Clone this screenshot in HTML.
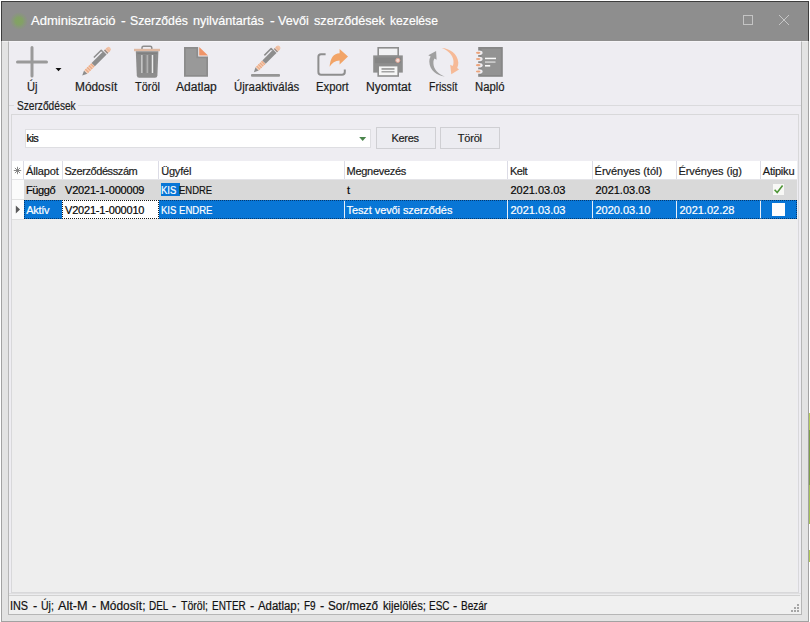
<!DOCTYPE html>
<html>
<head>
<meta charset="utf-8">
<title>Vevői szerződések kezelése</title>
<style>
html,body{margin:0;padding:0;}
body{width:810px;height:622px;overflow:hidden;background:#ffffff;position:relative;font-family:"Liberation Sans",sans-serif;font-size:12px;color:#1a1a1a;}
div,svg{position:absolute;box-sizing:border-box;}
.tx{white-space:pre;line-height:16px;height:16px;-webkit-text-stroke:0.2px currentColor;}
</style>
</head>
<body>

<div style="left:809px;top:413px;width:1px;height:17px;background:#b4cc5c;"></div>
<div style="left:809px;top:430px;width:1px;height:55px;background:#7f9f4a;"></div>
<div style="left:809px;top:485px;width:1px;height:39px;background:#a6c25a;"></div>
<div style="left:809px;top:550px;width:1px;height:12px;background:#b0c858;"></div>
<div style="left:1px;top:1px;width:808px;height:621px;background:#e3e3e3;border:1px solid #a2a2a2;"></div>
<div style="left:8px;top:41px;width:794px;height:574px;background:#eeedf2;border:1px solid #b6b6b6;border-top:none;"></div>
<div style="left:1px;top:1px;width:808px;height:40px;background:#8e8e8e;border:1px solid #3d3d3d;border-bottom:none;"></div>
<div style="left:10px;top:12px;width:18px;height:18px;border-radius:9px;background:radial-gradient(circle closest-side,#82a362 0%,#83a166 40%,rgba(131,160,104,0.5) 65%,rgba(138,148,130,0) 100%);"></div>
<div class="tx" style="left:31.3px;top:12.6px;font-size:13px;letter-spacing:0px;color:#ffffff;transform-origin:0 0;transform:scaleX(1.001);">Adminisztráció</div>
<div class="tx" style="left:120.74px;top:12.6px;font-size:13px;letter-spacing:0px;color:#ffffff;transform-origin:0 0;transform:scaleX(1.080);">-</div>
<div class="tx" style="left:129.5px;top:12.6px;font-size:13px;letter-spacing:0px;color:#ffffff;transform-origin:0 0;transform:scaleX(0.942);">Szerződés</div>
<div class="tx" style="left:193.4px;top:12.6px;font-size:13px;letter-spacing:0px;color:#ffffff;transform-origin:0 0;transform:scaleX(0.970);">nyilvántartás</div>
<div class="tx" style="left:270.24px;top:12.6px;font-size:13px;letter-spacing:0px;color:#ffffff;transform-origin:0 0;transform:scaleX(1.080);">-</div>
<div class="tx" style="left:278.4px;top:12.6px;font-size:13px;letter-spacing:0px;color:#ffffff;transform-origin:0 0;transform:scaleX(0.965);">Vevői</div>
<div class="tx" style="left:313.6px;top:12.6px;font-size:13px;letter-spacing:0px;color:#ffffff;transform-origin:0 0;transform:scaleX(0.972);">szerződések</div>
<div class="tx" style="left:389.8px;top:12.6px;font-size:13px;letter-spacing:0px;color:#ffffff;transform-origin:0 0;transform:scaleX(0.934);">kezelése</div>
<div style="left:743px;top:15px;width:10px;height:10px;border:1px solid #c4c4c4;"></div>
<svg style="left:776px;top:12px" width="16" height="16" viewBox="0 0 16 16"><path d="M3 3 L13 13 M13 3 L3 13" stroke="#c6c6c6" stroke-width="1" fill="none"/></svg>
<div style="left:2px;top:41px;width:806px;height:1px;background:rgba(255,255,255,0.45);"></div>
<div class="tx" style="left:26.8px;top:78.6px;font-size:12px;letter-spacing:0px;color:#1c1c1c;transform-origin:0 0;transform:scaleX(0.928);">Új</div>
<div class="tx" style="left:74.8px;top:78.6px;font-size:12px;letter-spacing:0px;color:#1c1c1c;transform-origin:0 0;transform:scaleX(0.990);">Módosít</div>
<div class="tx" style="left:135.4px;top:78.6px;font-size:12px;letter-spacing:0px;color:#1c1c1c;transform-origin:0 0;transform:scaleX(0.911);">Töröl</div>
<div class="tx" style="left:175.9px;top:78.6px;font-size:12px;letter-spacing:0px;color:#1c1c1c;transform-origin:0 0;transform:scaleX(1.002);">Adatlap</div>
<div class="tx" style="left:233.6px;top:78.6px;font-size:12px;letter-spacing:0px;color:#1c1c1c;transform-origin:0 0;transform:scaleX(0.949);">Újraaktiválás</div>
<div class="tx" style="left:315.7px;top:78.6px;font-size:12px;letter-spacing:0px;color:#1c1c1c;transform-origin:0 0;transform:scaleX(0.939);">Export</div>
<div class="tx" style="left:365.7px;top:78.6px;font-size:12px;letter-spacing:0px;color:#1c1c1c;transform-origin:0 0;transform:scaleX(1.012);">Nyomtat</div>
<div class="tx" style="left:428.7px;top:78.6px;font-size:12px;letter-spacing:0px;color:#1c1c1c;transform-origin:0 0;transform:scaleX(0.873);">Frissít</div>
<div class="tx" style="left:475.2px;top:78.6px;font-size:12px;letter-spacing:0px;color:#1c1c1c;transform-origin:0 0;transform:scaleX(0.941);">Napló</div>
<svg id="icons" style="left:0;top:41px" width="810" height="45" viewBox="0 41 810 45">
<path d="M17.5 62.1 H46.5 M32 47.5 V76" stroke="#9a9a9a" stroke-width="3" stroke-linecap="round" fill="none"/>
<path d="M55.5 68 H61.5 L58.5 71.2 Z" fill="#111"/>
<g transform="translate(82.2,75.6) rotate(-45)"><path d="M0 0 L5.00 -2.35 L5.00 2.35 Z" fill="#8d8d8d"/><rect x="5.00" y="-2.35" width="10.60" height="4.7" fill="#f4cdb4"/><rect x="6.30" y="-2.35" width="1.10" height="4.7" fill="#eaa783"/><rect x="8.80" y="-2.35" width="1.10" height="4.7" fill="#eaa783"/><rect x="11.30" y="-2.35" width="1.10" height="4.7" fill="#eaa783"/><rect x="13.80" y="-2.35" width="1.10" height="4.7" fill="#eaa783"/><rect x="15.60" y="-2.35" width="16.60" height="4.7" fill="#8d8d8d"/><rect x="33.00" y="-2.35" width="1.80" height="4.7" fill="#a09088"/><path d="M34.80 -2.35 H37.20 A2.35 2.35 0 0 1 37.20 2.35 H34.80 Z" fill="#f1c3a7"/><rect x="36.20" y="-2.35" width="0.90" height="4.7" fill="#eab398"/><path d="M21.00 -4.5 H31.40 V-2.35" stroke="#8d8d8d" stroke-width="1.5" fill="none" stroke-linejoin="round"/></g>
<path d="M142 49 V47.8 Q142 46.2 143.6 46.2 H150.2 Q151.8 46.2 151.8 47.8 V49" stroke="#8d8d8d" stroke-width="1.5" fill="none"/>
<rect x="134" y="48.8" width="26" height="2.4" fill="#dfb9a2"/>
<path d="M135.8 51.2 H158.4 L157.4 75.6 Q157.3 77.8 155 77.8 H139.2 Q136.9 77.8 136.8 75.6 Z" fill="#8d8d8d"/>
<rect x="137.2" y="52.6" width="20" height="1.6" fill="#808080"/><rect x="143" y="55" width="2.4" height="18" fill="#848484"/><rect x="148.6" y="55" width="2.4" height="18" fill="#848484"/><rect x="153.4" y="55" width="2" height="18" fill="#848484"/>
<rect x="141" y="55" width="1.6" height="18" fill="#c4c4c4"/><rect x="146.6" y="55" width="1.6" height="18" fill="#b0b0b0"/><rect x="151.8" y="55" width="1.4" height="18" fill="#ececec"/>
<path d="M184 47 H198.2 V56.4 H208 V76.8 H184 Z" fill="#8c8c8c"/>
<path d="M185.8 48.8 H196.4 V58.2 H206.2 V75 H185.8 Z" fill="#999999"/>
<path d="M199.2 47 L208 55.4 H199.2 Z" fill="#ef9468"/>
<g transform="translate(253.9,72.2) rotate(-45)"><path d="M0 0 L4.59 -2.35 L4.59 2.35 Z" fill="#8d8d8d"/><rect x="4.59" y="-2.35" width="9.74" height="4.7" fill="#f4cdb4"/><rect x="5.79" y="-2.35" width="1.01" height="4.7" fill="#eaa783"/><rect x="8.09" y="-2.35" width="1.01" height="4.7" fill="#eaa783"/><rect x="10.38" y="-2.35" width="1.01" height="4.7" fill="#eaa783"/><rect x="12.68" y="-2.35" width="1.01" height="4.7" fill="#eaa783"/><rect x="14.33" y="-2.35" width="15.25" height="4.7" fill="#8d8d8d"/><rect x="30.32" y="-2.35" width="1.65" height="4.7" fill="#a09088"/><path d="M31.97 -2.35 H34.18 A2.35 2.35 0 0 1 34.18 2.35 H31.97 Z" fill="#f1c3a7"/><rect x="33.26" y="-2.35" width="0.83" height="4.7" fill="#eab398"/><path d="M19.29 -4.5 H28.85 V-2.35" stroke="#8d8d8d" stroke-width="1.5" fill="none" stroke-linejoin="round"/></g>
<rect x="251" y="74" width="29" height="2.8" rx="1" fill="#959595"/>
<path d="M325.6 54.2 H321 Q318.4 54.2 318.4 56.8 V72 Q318.4 74.8 321 74.8 H342 Q344.8 74.8 344.8 72 V69.6" stroke="#8e8e8e" stroke-width="2" fill="none"/>
<path d="M348 56.4 L339.6 49 V53.2 Q330.5 53.6 329.6 66.8 Q333 60.6 339.6 60.4 V64.6 Z" fill="#f2a467"/>
<rect x="378.2" y="47.8" width="20" height="8.4" fill="#f1f1f3" stroke="#8e8e8e" stroke-width="1.6"/>
<rect x="373.2" y="55.4" width="29.6" height="17.2" fill="#8e8e8e"/>
<rect x="375" y="57.6" width="26" height="5.6" fill="#858585"/>
<circle cx="397.8" cy="60.4" r="2.1" fill="#f3dcd4" stroke="#e1a595" stroke-width="1"/>
<rect x="378.2" y="65.6" width="20" height="10.4" fill="#f6f6f6" stroke="#8e8e8e" stroke-width="1.6"/>
<rect x="381.5" y="68.2" width="13" height="1.5" fill="#8e8e8e"/><rect x="381.5" y="71.2" width="13" height="1.2" fill="#8e8e8e"/>
<path d="M444.8 76.4 C437 75.8 429.5 70.5 429.3 61.5 Q429.3 58.5 430.6 56.4 L428.3 55.2 L436.1 51 L436.6 59.8 L434.4 58.4 Q433.2 60.5 433.4 63.5 C433.8 69.5 438 74 444.8 76.4 Z" fill="#a0a0a0"/>
<path d="M441.7 48 C449.5 48.4 457.6 53.5 458.3 62.5 Q458.4 65.5 457.2 68 L459 69.4 L451.3 74.2 L450.2 64.8 L452.6 66 Q453.8 63.8 453.5 61 C452.8 55 448.5 50.5 441.7 48 Z" fill="#f6ba97"/>
<rect x="478.2" y="47" width="24.6" height="29.8" fill="#878787"/>
<rect x="481.6" y="48.8" width="19.2" height="26.2" fill="#939393"/>
<ellipse cx="479" cy="52.8" rx="3.6" ry="2.3" fill="#efedf1"/>
<ellipse cx="478.2" cy="52.8" rx="2.3" ry="1.1" fill="#eba47c"/>
<ellipse cx="479" cy="59.0" rx="3.6" ry="2.3" fill="#efedf1"/>
<ellipse cx="478.2" cy="59.0" rx="2.3" ry="1.1" fill="#eba47c"/>
<ellipse cx="479" cy="65.2" rx="3.6" ry="2.3" fill="#efedf1"/>
<ellipse cx="478.2" cy="65.2" rx="2.3" ry="1.1" fill="#eba47c"/>
<ellipse cx="479" cy="71.5" rx="3.6" ry="2.3" fill="#efedf1"/>
<ellipse cx="478.2" cy="71.5" rx="2.3" ry="1.1" fill="#eba47c"/>
<rect x="485" y="57.7" width="11" height="1.5" fill="#fafafa"/><rect x="485" y="61.3" width="10.5" height="1.6" fill="#d0d0d0"/><rect x="485" y="65" width="5.2" height="1.6" fill="#fafafa"/>
</svg>
<div style="left:9px;top:105px;width:792px;height:1px;background:#dadadd;"></div>
<div style="left:14px;top:100px;width:64px;height:12px;background:#eeedf2;"></div>
<div class="tx" style="left:16.7px;top:97.8px;font-size:12px;letter-spacing:0px;color:#1c1c1c;transform-origin:0 0;transform:scaleX(0.846);">Szerződések</div>
<div style="left:11px;top:114px;width:788px;height:479px;border:1px solid #d8d8da;background:#eeedf2;"></div>
<div style="left:25px;top:129px;width:346px;height:19px;background:#ffffff;border:1px solid #dedee2;"></div>
<div class="tx" style="left:26.6px;top:130px;font-size:11px;letter-spacing:-0.6px;color:#0a0a0a;">kis</div>
<svg style="left:358px;top:136px" width="10" height="6" viewBox="0 0 10 6"><path d="M1.2 1.1 H8.2 L4.7 5 Z" fill="#4a854b"/></svg>
<div style="left:376px;top:127px;width:60px;height:22px;background:#ececf1;border:1px solid #cfcfd3;"></div>
<div class="tx" style="left:391.6px;top:130px;font-size:11px;letter-spacing:-0.35px;color:#1c1c1c;">Keres</div>
<div style="left:440px;top:127px;width:60px;height:22px;background:#ececf1;border:1px solid #cfcfd3;"></div>
<div class="tx" style="left:457.8px;top:130px;font-size:11px;letter-spacing:-0.21px;color:#1c1c1c;">Töröl</div>
<div style="left:12px;top:161px;width:785px;height:431px;background:#eeeeee;"></div>
<div style="left:12px;top:161px;width:785px;height:18px;background:#ffffff;"></div>
<div style="left:23px;top:161px;width:1px;height:18px;background:#dcdce6;"></div>
<div style="left:62px;top:161px;width:1px;height:18px;background:#dcdce6;"></div>
<div style="left:158px;top:161px;width:1px;height:18px;background:#dcdce6;"></div>
<div style="left:344px;top:161px;width:1px;height:18px;background:#dcdce6;"></div>
<div style="left:507px;top:161px;width:1px;height:18px;background:#dcdce6;"></div>
<div style="left:592px;top:161px;width:1px;height:18px;background:#dcdce6;"></div>
<div style="left:676px;top:161px;width:1px;height:18px;background:#dcdce6;"></div>
<div style="left:760px;top:161px;width:1px;height:18px;background:#dcdce6;"></div>
<div style="left:12px;top:179px;width:785px;height:1px;background:#e4e4e8;"></div>
<svg style="left:13px;top:166px" width="9" height="9" viewBox="0 0 9 9"><path d="M4.5 0.8 V8.2 M0.8 4.5 H8.2 M1.9 1.9 L7.1 7.1 M7.1 1.9 L1.9 7.1" stroke="#7c7c7c" stroke-width="0.9" fill="none"/></svg>
<div class="tx" style="left:26.1px;top:163px;font-size:11px;letter-spacing:-0.15px;color:#1c1c1c;">Állapot</div>
<div class="tx" style="left:64.4px;top:163px;font-size:11px;letter-spacing:-0.405px;color:#1c1c1c;">Szerződésszám</div>
<div class="tx" style="left:161.2px;top:163px;font-size:11px;letter-spacing:-0.2px;color:#1c1c1c;">Ügyfél</div>
<div class="tx" style="left:346.5px;top:163px;font-size:11px;letter-spacing:-0.28px;color:#1c1c1c;">Megnevezés</div>
<div class="tx" style="left:509.9px;top:163px;font-size:11px;letter-spacing:-0.39px;color:#1c1c1c;">Kelt</div>
<div class="tx" style="left:594.6px;top:163px;font-size:11px;letter-spacing:-0.03px;color:#1c1c1c;">Érvényes (tól)</div>
<div class="tx" style="left:678.5px;top:163px;font-size:11px;letter-spacing:-0.11px;color:#1c1c1c;">Érvényes (ig)</div>
<div class="tx" style="left:762.8px;top:163px;font-size:11px;letter-spacing:-0.22px;color:#1c1c1c;">Atipiku</div>
<div style="left:12px;top:180px;width:12px;height:19px;background:#fbfbfb;"></div>
<div style="left:12px;top:199px;width:12px;height:1px;background:#e2e2e2;"></div>
<div style="left:24px;top:180px;width:773px;height:20px;background:#d9d9d9;"></div>
<div style="left:161px;top:183px;width:19px;height:13px;background:#0876d6;"></div>
<div class="tx" style="left:26px;top:182px;font-size:11px;letter-spacing:-0.4px;color:#050505;">Függő</div>
<div class="tx" style="left:65px;top:182px;font-size:11px;letter-spacing:-0.19px;color:#050505;">V2021-1-000009</div>
<div class="tx" style="left:161.2px;top:182px;font-size:11px;letter-spacing:0px;color:#fff;transform-origin:0 0;transform:scaleX(0.86);">KIS </div>
<div class="tx" style="left:179.1px;top:182px;font-size:11px;letter-spacing:0px;color:#111;transform-origin:0 0;transform:scaleX(0.86);">ENDRE</div>
<div class="tx" style="left:347px;top:182px;font-size:11px;letter-spacing:0px;color:#050505;">t</div>
<div class="tx" style="left:510.4px;top:182px;font-size:11px;letter-spacing:0px;color:#050505;">2021.03.03</div>
<div class="tx" style="left:595.4px;top:182px;font-size:11px;letter-spacing:0px;color:#050505;">2021.03.03</div>
<div style="left:773px;top:184px;width:11px;height:11px;background:#f8f8f6;"></div>
<svg style="left:773px;top:184px" width="11" height="11" viewBox="0 0 11 11"><path d="M1.6 5.8 L4.2 8.6 L9.6 1.6" stroke="#4f9638" stroke-width="1.6" fill="none"/></svg>
<div style="left:12px;top:200px;width:12px;height:19px;background:#fbfbfb;"></div>
<svg style="left:15px;top:205px" width="6" height="9" viewBox="0 0 6 9"><path d="M0.8 0.4 L5 4.4 L0.8 8.4 Z" fill="#5a5a5a"/></svg>
<div style="left:24px;top:200px;width:773px;height:19px;background:#0876d6;"></div>
<div style="left:62px;top:200px;width:1px;height:19px;background:#e6eef8;"></div>
<div style="left:158px;top:200px;width:1px;height:19px;background:#e6eef8;"></div>
<div style="left:344px;top:200px;width:1px;height:19px;background:#e6eef8;"></div>
<div style="left:507px;top:200px;width:1px;height:19px;background:#e6eef8;"></div>
<div style="left:592px;top:200px;width:1px;height:19px;background:#e6eef8;"></div>
<div style="left:676px;top:200px;width:1px;height:19px;background:#e6eef8;"></div>
<div style="left:760px;top:200px;width:1px;height:19px;background:#e6eef8;"></div>
<div style="left:12px;top:219px;width:12px;height:1px;background:#e0e0e0;"></div>
<div style="left:24px;top:200px;width:773px;height:1px;background:repeating-linear-gradient(90deg,rgba(0,20,50,0.62) 0 1px,transparent 1px 2px);"></div>
<div style="left:24px;top:218px;width:773px;height:1px;background:repeating-linear-gradient(90deg,rgba(0,20,50,0.62) 0 1px,transparent 1px 2px);"></div>
<div style="left:24px;top:200px;width:1px;height:19px;background:repeating-linear-gradient(180deg,rgba(0,20,50,0.62) 0 1px,transparent 1px 2px);"></div>
<div style="left:796px;top:200px;width:1px;height:19px;background:repeating-linear-gradient(180deg,rgba(0,20,50,0.62) 0 1px,transparent 1px 2px);"></div>
<div style="left:62px;top:200px;width:97px;height:19px;background:#ffffff;"></div>
<div style="left:62px;top:200px;width:97px;height:1px;background:repeating-linear-gradient(90deg,#1c1c1c 0 1px,transparent 1px 2px);"></div>
<div style="left:62px;top:218px;width:97px;height:1px;background:repeating-linear-gradient(90deg,#1c1c1c 0 1px,transparent 1px 2px);"></div>
<div style="left:62px;top:200px;width:1px;height:19px;background:repeating-linear-gradient(180deg,#1c1c1c 0 1px,transparent 1px 2px);"></div>
<div style="left:158px;top:200px;width:1px;height:19px;background:repeating-linear-gradient(180deg,#1c1c1c 0 1px,transparent 1px 2px);"></div>
<div class="tx" style="left:26.3px;top:202px;font-size:11px;letter-spacing:-0.29px;color:#fff;">Aktív</div>
<div class="tx" style="left:65px;top:202px;font-size:11px;letter-spacing:-0.19px;color:#050505;">V2021-1-000010</div>
<div class="tx" style="left:160.6px;top:202px;font-size:11px;letter-spacing:0px;color:#fff;transform-origin:0 0;transform:scaleX(0.868);">KIS ENDRE</div>
<div class="tx" style="left:346.5px;top:202px;font-size:11px;letter-spacing:-0.086px;color:#fff;">Teszt vevői szerződés</div>
<div class="tx" style="left:510.4px;top:202px;font-size:11px;letter-spacing:0px;color:#fff;">2021.03.03</div>
<div class="tx" style="left:595.4px;top:202px;font-size:11px;letter-spacing:0px;color:#fff;">2020.03.10</div>
<div class="tx" style="left:679.4px;top:202px;font-size:11px;letter-spacing:0px;color:#fff;">2021.02.28</div>
<div style="left:772px;top:203px;width:13px;height:13px;background:#fdfdfd;"></div>
<div style="left:9px;top:593px;width:792px;height:1px;background:#dfdfe0;"></div>
<div style="left:9px;top:594px;width:792px;height:1px;background:#ececee;"></div>
<div style="left:9px;top:595px;width:791px;height:1px;background:#d2d2d2;"></div>
<div style="left:9px;top:596px;width:792px;height:18px;background:#f0f0f0;"></div>
<div class="tx" style="left:10.39px;top:598px;font-size:12px;letter-spacing:0px;color:#111;transform-origin:0 0;transform:scaleX(0.905);">INS</div>
<div class="tx" style="left:33.3px;top:598px;font-size:12px;letter-spacing:0px;color:#111;transform-origin:0 0;transform:scaleX(1.050);">-</div>
<div class="tx" style="left:41.1px;top:598px;font-size:12px;letter-spacing:0px;color:#111;transform-origin:0 0;transform:scaleX(0.879);">Új;</div>
<div class="tx" style="left:57.56px;top:598px;font-size:12px;letter-spacing:0px;color:#111;transform-origin:0 0;transform:scaleX(1.060);">Alt-M</div>
<div class="tx" style="left:92.1px;top:598px;font-size:12px;letter-spacing:0px;color:#111;transform-origin:0 0;transform:scaleX(1.050);">-</div>
<div class="tx" style="left:99.9px;top:598px;font-size:12px;letter-spacing:0px;color:#111;transform-origin:0 0;transform:scaleX(0.987);">Módosít;</div>
<div class="tx" style="left:148.88px;top:598px;font-size:12px;letter-spacing:0px;color:#111;transform-origin:0 0;transform:scaleX(0.830);">DEL</div>
<div class="tx" style="left:171.8px;top:598px;font-size:12px;letter-spacing:0px;color:#111;transform-origin:0 0;transform:scaleX(1.050);">-</div>
<div class="tx" style="left:181.4px;top:598px;font-size:12px;letter-spacing:0px;color:#111;transform-origin:0 0;transform:scaleX(0.877);">Töröl;</div>
<div class="tx" style="left:212.08px;top:598px;font-size:12px;letter-spacing:0px;color:#111;transform-origin:0 0;transform:scaleX(0.830);">ENTER</div>
<div class="tx" style="left:250.0px;top:598px;font-size:12px;letter-spacing:0px;color:#111;transform-origin:0 0;transform:scaleX(1.050);">-</div>
<div class="tx" style="left:257.8px;top:598px;font-size:12px;letter-spacing:0px;color:#111;transform-origin:0 0;transform:scaleX(0.950);">Adatlap;</div>
<div class="tx" style="left:304.21px;top:598px;font-size:12px;letter-spacing:0px;color:#111;transform-origin:0 0;transform:scaleX(0.830);">F9</div>
<div class="tx" style="left:320.3px;top:598px;font-size:12px;letter-spacing:0px;color:#111;transform-origin:0 0;transform:scaleX(1.050);">-</div>
<div class="tx" style="left:328.1px;top:598px;font-size:12px;letter-spacing:0px;color:#111;transform-origin:0 0;transform:scaleX(0.975);">Sor/mező</div>
<div class="tx" style="left:382.7px;top:598px;font-size:12px;letter-spacing:0px;color:#111;transform-origin:0 0;transform:scaleX(0.932);">kijelölés;</div>
<div class="tx" style="left:428.98px;top:598px;font-size:12px;letter-spacing:0px;color:#111;transform-origin:0 0;transform:scaleX(0.830);">ESC</div>
<div class="tx" style="left:453.4px;top:598px;font-size:12px;letter-spacing:0px;color:#111;transform-origin:0 0;transform:scaleX(1.050);">-</div>
<div class="tx" style="left:461.4px;top:598px;font-size:12px;letter-spacing:0px;color:#111;transform-origin:0 0;transform:scaleX(0.836);">Bezár</div>
<div style="left:797px;top:604px;width:2px;height:2px;background:#a6a6a6;"></div>
<div style="left:794px;top:607px;width:2px;height:2px;background:#a6a6a6;"></div>
<div style="left:797px;top:607px;width:2px;height:2px;background:#a6a6a6;"></div>
<div style="left:791px;top:610px;width:2px;height:2px;background:#a6a6a6;"></div>
<div style="left:794px;top:610px;width:2px;height:2px;background:#a6a6a6;"></div>
<div style="left:797px;top:610px;width:2px;height:2px;background:#a6a6a6;"></div>

</body>
</html>
